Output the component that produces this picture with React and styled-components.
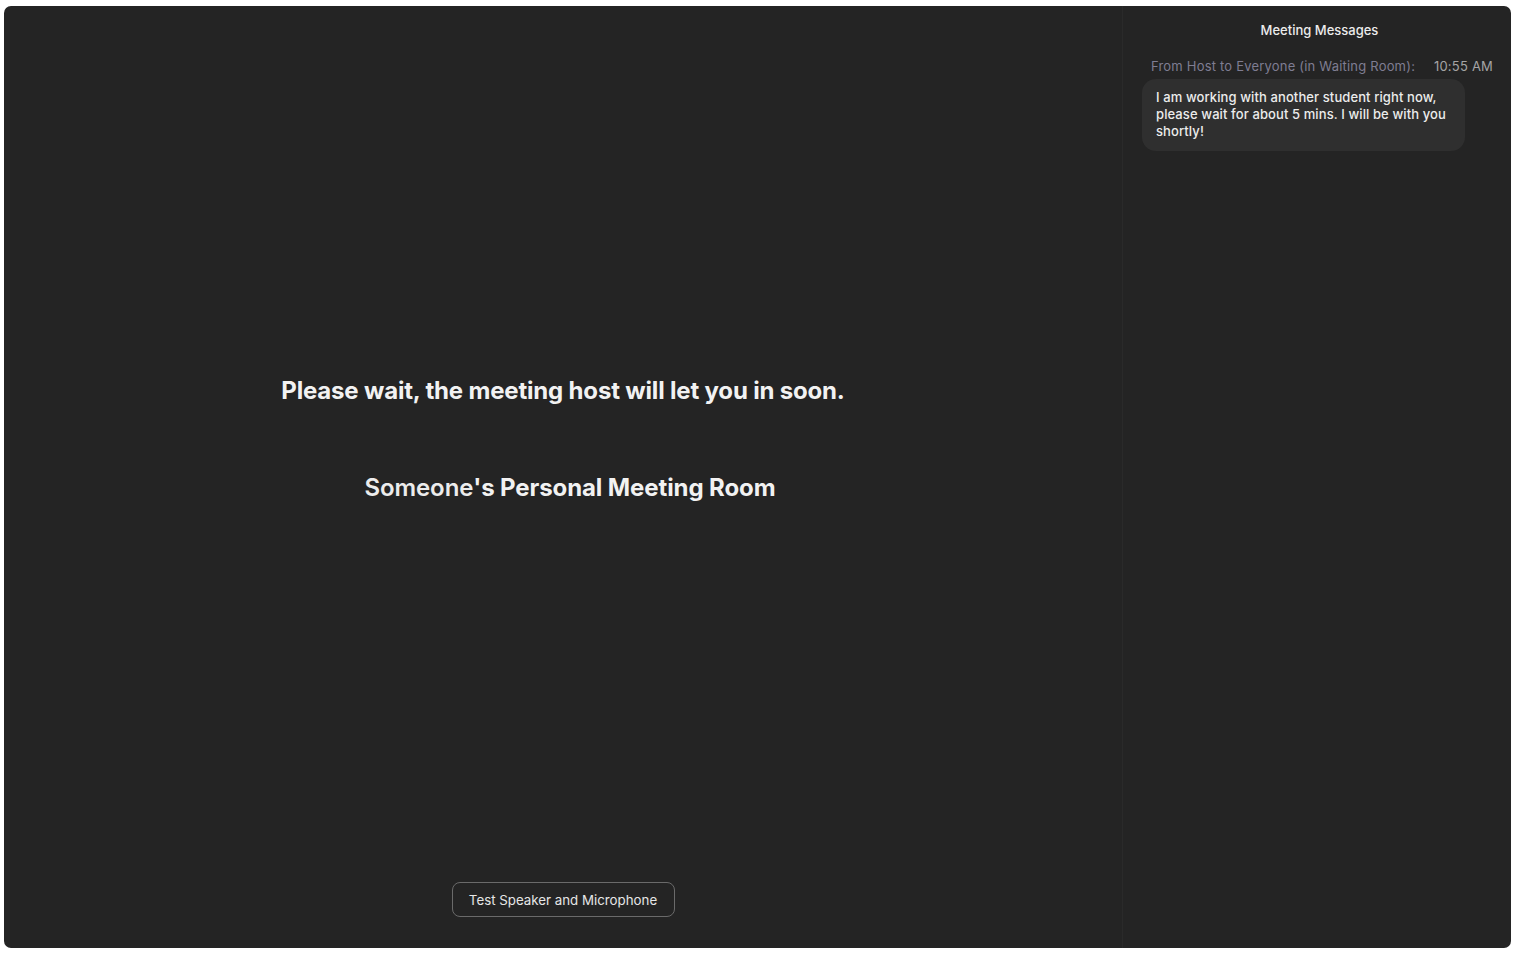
import React from 'react'
import styled, { createGlobalStyle } from 'styled-components'

const GlobalStyle = createGlobalStyle`
  html, body {
    margin: 0;
    padding: 0;
    background: #ffffff;
  }
  body {
    font-family: Inter, "Liberation Sans", sans-serif;
    -webkit-font-smoothing: antialiased;
  }
`;

const Window = styled.div`
  margin: 6px 5px 0 4px;
  width: 1507px;
  height: 942px;
  display: flex;
  background: #242424;
  border-radius: 7px;
  overflow: hidden;
`;

const Stage = styled.div`
  flex: 1;
  display: flex;
  flex-direction: column;
  align-items: center;
`;

const Center = styled.div`
  flex: 1;
  display: flex;
  flex-direction: column;
  align-items: center;
  padding-top: 370px;
  gap: 67px;
`;

const Title = styled.h1`
  margin: 0;
  color: #f2f2f2;
  font-size: 24px;
  font-weight: 700;
  letter-spacing: -0.18px;
  line-height: 30px;
`;

const RoomName = styled.h2`
  margin: 0;
  color: #f2f2f2;
  font-size: 24px;
  font-weight: 700;
  letter-spacing: -0.1px;
  line-height: 30px;
  padding-left: 14px;
`;

const Owner = styled.span`
  font-weight: 600;
  color: #ececec;
`;

const Footer = styled.div`
  padding-bottom: 31px;
`;

const TestButton = styled.button`
  width: 223px;
  height: 35px;
  background: transparent;
  border: 1px solid #6a6a6a;
  border-radius: 8px;
  color: #e6e6e6;
  font-family: inherit;
  font-size: 13.3px;
  font-weight: 400;
  cursor: pointer;
`;

const Sidebar = styled.aside`
  width: 389px;
  border-left: 1px solid #2a2a2a;
  display: flex;
  flex-direction: column;
  padding: 14px 18px 0 19px;
  box-sizing: border-box;
`;

const SideTitle = styled.div`
  text-align: center;
  color: #ececec;
  font-size: 13px;
  font-weight: 500;
  line-height: 20px;
  padding-left: 4px;
`;

const Meta = styled.div`
  display: flex;
  justify-content: space-between;
  margin-top: 16px;
  padding-left: 9px;
  font-size: 13px;
  letter-spacing: 0.2px;
  line-height: 20px;
`;

const Sender = styled.span`
  color: #7f7d92;
`;

const Time = styled.span`
  color: #a4a4a4;
`;

const Bubble = styled.div`
  margin-top: 3px;
  width: 323px;
  box-sizing: border-box;
  padding: 10px 14px 11px;
  background: #2f2f2f;
  border-radius: 14px;
  color: #ececec;
  font-size: 13px;
  font-weight: 500;
  letter-spacing: 0.1px;
  line-height: 17px;
`;

export default function App() {
  return (
    <>
      <GlobalStyle />
      <Window>
        <Stage>
          <Center>
            <Title>Please wait, the meeting host will let you in soon.</Title>
            <RoomName>
              <Owner>Someone</Owner>'s Personal Meeting Room
            </RoomName>
          </Center>
          <Footer>
            <TestButton>Test Speaker and Microphone</TestButton>
          </Footer>
        </Stage>
        <Sidebar>
          <SideTitle>Meeting Messages</SideTitle>
          <Meta>
            <Sender>From Host to Everyone (in Waiting Room):</Sender>
            <Time>10:55 AM</Time>
          </Meta>
          <Bubble>
            I am working with another student right now, please wait for about 5 mins. I will be with you shortly!
          </Bubble>
        </Sidebar>
      </Window>
    </>
  )
}
